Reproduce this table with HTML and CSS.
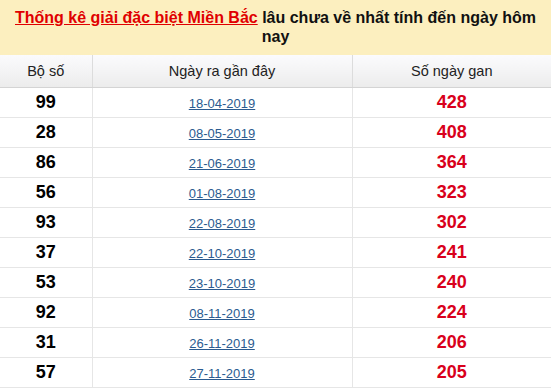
FILE: index.html
```html
<!DOCTYPE html>
<html lang="vi">
<head>
<meta charset="utf-8">
<link rel="stylesheet" href="styles.css">
</head>
<body>
<div class="box">
  <h2 class="title"><a href="#" class="title-link">Thống kê giải đặc biệt Miền Bắc</a> lâu chưa về nhất tính đến ngày hôm nay</h2>
  <table class="gan">
    <colgroup><col class="c1"><col class="c2"><col class="c3"></colgroup>
    <thead>
      <tr><th>Bộ số</th><th>Ngày ra gần đây</th><th>Số ngày gan</th></tr>
    </thead>
    <tbody>
      <tr><td class="num">99</td><td><a href="#" class="date">18-04-2019</a></td><td class="gan-n">428</td></tr>
      <tr><td class="num">28</td><td><a href="#" class="date">08-05-2019</a></td><td class="gan-n">408</td></tr>
      <tr><td class="num">86</td><td><a href="#" class="date">21-06-2019</a></td><td class="gan-n">364</td></tr>
      <tr><td class="num">56</td><td><a href="#" class="date">01-08-2019</a></td><td class="gan-n">323</td></tr>
      <tr><td class="num">93</td><td><a href="#" class="date">22-08-2019</a></td><td class="gan-n">302</td></tr>
      <tr><td class="num">37</td><td><a href="#" class="date">22-10-2019</a></td><td class="gan-n">241</td></tr>
      <tr><td class="num">53</td><td><a href="#" class="date">23-10-2019</a></td><td class="gan-n">240</td></tr>
      <tr><td class="num">92</td><td><a href="#" class="date">08-11-2019</a></td><td class="gan-n">224</td></tr>
      <tr><td class="num">31</td><td><a href="#" class="date">26-11-2019</a></td><td class="gan-n">206</td></tr>
      <tr><td class="num">57</td><td><a href="#" class="date">27-11-2019</a></td><td class="gan-n">205</td></tr>
    </tbody>
  </table>
</div>
</body>
</html>
```
FILE: styles.css
```css
html, body {
  margin: 0;
  padding: 0;
  background: #fff;
}
body {
  font-family: "Liberation Sans", Arial, sans-serif;
  color: #000;
}
.box {
  width: 551px;
}
.title {
  margin: 0;
  background: #fcefbf;
  height: 55px;
  box-sizing: border-box;
  padding: 8px 6px 0;
  font-size: 16px;
  line-height: 19px;
  font-weight: bold;
  text-align: center;
  color: #111;
}
.title-link {
  color: #e00000;
  text-decoration: underline;
}
.gan {
  width: 551px;
  border-collapse: collapse;
  table-layout: fixed;
}
.c1 { width: 92px; }
.c2 { width: 260px; }
.c3 { width: 199px; }
.gan th {
  height: 32px;
  padding: 0;
  font-size: 14.5px;
  font-weight: normal;
  color: #222;
  background: linear-gradient(#fbfbfd, #ececec);
  border-bottom: 1px solid #d4d4d4;
  border-left: 1px solid #dcdcdc;
  text-align: center;
}
.gan th:first-child { border-left: none; }
.gan td {
  height: 29px;
  padding: 0;
  text-align: center;
  border-bottom: 1px solid #e6e6e6;
  border-left: 1px solid #e6e6e6;
}
.gan td:first-child { border-left: none; }
.num {
  font-size: 18px;
  font-weight: bold;
  color: #000;
}
.date {
  font-size: 13px;
  color: #2b5b90;
  text-decoration: underline;
}
.gan-n {
  font-size: 18px;
  font-weight: bold;
  color: #d9001b;
}
```
